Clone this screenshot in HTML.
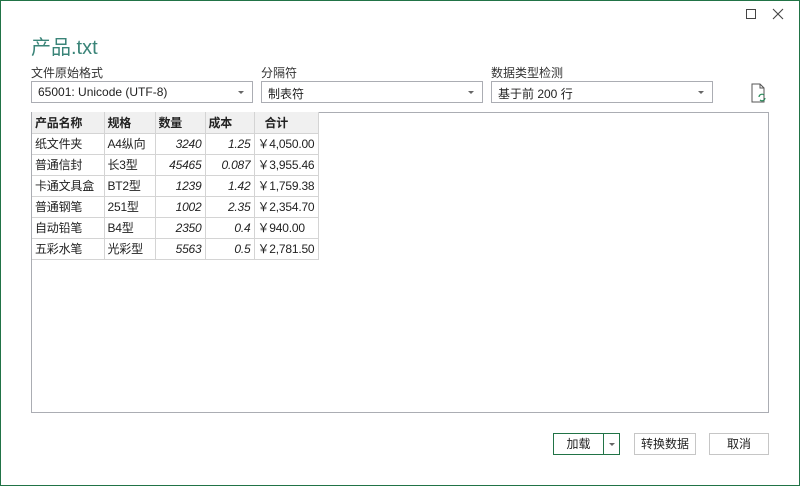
<!DOCTYPE html><html><head><meta charset="utf-8"><style>
*{box-sizing:border-box;margin:0;padding:0}
body{width:800px;height:486px;overflow:hidden;background:#fff;font-family:"Liberation Sans","Noto Sans CJK SC",sans-serif;font-size:12px;color:#222;position:relative}
.win{position:absolute;left:0;top:0;width:800px;height:486px;border:1px solid #217346}
.a{position:absolute}
.dd{position:absolute;height:22px;border:1px solid #abadb3;padding:3px 6px;font-size:12px}
.dd:after{content:"";position:absolute;right:8px;top:9px;border-left:3px solid transparent;border-right:3px solid transparent;border-top:3px solid #666}
.lbl{position:absolute;font-size:12px;color:#333}
table{position:absolute;left:32px;top:112px;border-collapse:collapse;font-size:12px;table-layout:fixed;width:286px}
td{border:1px solid #d4d4d4;height:21px;padding:0 3px;white-space:nowrap;overflow:hidden;letter-spacing:-0.2px}
tr:first-child td{background:#f0f0f0;font-weight:bold;border-top:none}
td:first-child{border-left:none}
.n{text-align:right;font-style:italic}
.btn{position:absolute;height:22px;border:1px solid #c6c6c6;text-align:center;line-height:20px;font-size:12px}
</style></head><body><div class="win"></div>
<div class="a" style="left:746px;top:9px;width:10px;height:10px;border:1px solid #444"></div>
<svg class="a" style="left:772px;top:8px" width="12" height="12"><path d="M1 1L11 11M11 1L1 11" stroke="#444" stroke-width="1.1"/></svg>
<div class="a" style="left:31px;top:31px;font-size:20px;color:#3a8478">产品.txt</div>
<div class="lbl" style="left:31px;top:64px">文件原始格式</div>
<div class="lbl" style="left:261px;top:64px">分隔符</div>
<div class="lbl" style="left:491px;top:64px">数据类型检测</div>
<div class="dd" style="left:31px;top:81px;width:222px">65001: Unicode (UTF-8)</div>
<div class="dd" style="left:261px;top:81px;width:222px">制表符</div>
<div class="dd" style="left:491px;top:81px;width:222px">基于前 200 行</div>
<svg class="a" style="left:750px;top:83px" width="18" height="20"><path d="M2 1h8l4 4v14H2z" fill="none" stroke="#555"/><path d="M10 1v4h4" fill="none" stroke="#555"/><path d="M9 14a3 3 0 0 1 5-2M15 15a3 3 0 0 1-5 2" fill="none" stroke="#2a8a5a" stroke-width="1.2"/></svg>
<div class="a" style="left:31px;top:112px;width:738px;height:301px;border:1px solid #abadb3"></div>
<table>
<colgroup><col style="width:72px"><col style="width:51px"><col style="width:50px"><col style="width:49px"><col style="width:64px"></colgroup>
<tr><td>产品名称</td><td>规格</td><td>数量</td><td>成本</td><td style="padding-left:10px">合计</td></tr>
<tr><td>纸文件夹</td><td>A4纵向</td><td class="n">3240</td><td class="n">1.25</td><td>￥4,050.00</td></tr>
<tr><td>普通信封</td><td>长3型</td><td class="n">45465</td><td class="n">0.087</td><td>￥3,955.46</td></tr>
<tr><td>卡通文具盒</td><td>BT2型</td><td class="n">1239</td><td class="n">1.42</td><td>￥1,759.38</td></tr>
<tr><td>普通钢笔</td><td>251型</td><td class="n">1002</td><td class="n">2.35</td><td>￥2,354.70</td></tr>
<tr><td>自动铅笔</td><td>B4型</td><td class="n">2350</td><td class="n">0.4</td><td>￥940.00</td></tr>
<tr><td>五彩水笔</td><td>光彩型</td><td class="n">5563</td><td class="n">0.5</td><td>￥2,781.50</td></tr>
</table>
<div class="btn" style="left:553px;top:433px;width:67px;border-color:#217346"><span style="position:absolute;left:0;width:49px">加载</span><span style="position:absolute;left:49px;top:0;height:20px;border-left:1px solid #217346;width:16px"></span><span style="position:absolute;left:55px;top:9px;border-left:3px solid transparent;border-right:3px solid transparent;border-top:3px solid #666"></span></div>
<div class="btn" style="left:634px;top:433px;width:62px">转换数据</div>
<div class="btn" style="left:709px;top:433px;width:60px">取消</div>
</body></html>
